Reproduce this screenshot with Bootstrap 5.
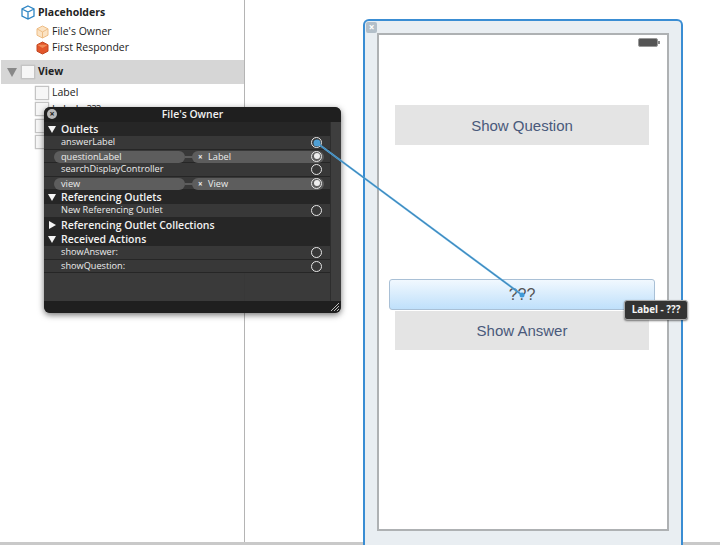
<!DOCTYPE html>
<html lang="en">
<head>
<meta charset="utf-8">
<title>File's Owner</title>
<link href="https://cdn.jsdelivr.net/npm/bootstrap@5.3.0/dist/css/bootstrap.min.css" rel="stylesheet">
<style>
html,body{height:545px;overflow:hidden;background:#fff}
body{font-family:"Open Sans","Liberation Sans",sans-serif;position:relative;color:#222}
.stage{height:542px}
.side{width:245px;border-right:1px solid #b4b4b4;font-size:10.5px;padding-left:1px}
.ph-head{height:24px;padding-left:20px;font-weight:700;gap:3px;padding-top:1px;font-size:10.5px}
.tree-r{height:16px;padding-left:35px;gap:3px}
.view-band{height:24px;background:#d6d6d6;margin-top:4px;font-weight:700;padding-left:6px;font-size:10.5px}
.tri-g{width:0;height:0;border-left:5px solid transparent;border-right:5px solid transparent;border-top:9px solid #888;margin-right:4px}
.box-i{width:14px;height:14px;background:#f6f6f6;border:1px solid #c4c4c4;box-shadow:0 0 1px #aaa;flex:none}
.box-v{margin-right:3px}
.sub-r{height:16.3px;padding-left:34px;gap:3px}
.sub-list{padding-top:1px}
.canvas-a{flex:1;padding:19px 0 0 118px}
.phone-w{width:320px;height:526px;border:2px solid #3a8dd3;border-bottom:0;border-radius:6px 6px 0 0;background:#e9eef2;padding:12px 12px 0;position:relative}
.x-i{position:absolute;left:1px;top:1px;width:11px;height:11px;background:#b3bfc9;border-radius:2px;color:#fff;font-size:10px;line-height:11px;text-align:center;font-weight:700}
.view-i{height:498px;background:#fff;border:2px solid #aeb1b3;padding:3px 5px 0 10px}
.batt{width:22px;height:9px;margin-left:auto;margin-right:2px;margin-bottom:58px;display:block}
.gray-b{height:40px;width:254px;margin-left:6px;background:#e4e4e4;color:#49597b;font:15px "Liberation Sans",sans-serif}
.gap-q{height:134px}
.lab-s{height:31px;width:266px;border:1px solid #a9c0d6;border-radius:3px;background:linear-gradient(#f1f8fe,#bfe0fb);color:#555;font:16px "Liberation Sans",sans-serif;margin-bottom:1px}
.gray-a{height:39px}
.bottom-b{height:3px;background:#c9c9c9}
.pop-w{position:absolute;left:44px;top:107px;width:297px;height:206px;background:rgba(52,52,52,.97);border-radius:6px;box-shadow:0 2px 6px rgba(0,0,0,.55);color:#ececec;font-size:9.2px;overflow:hidden}
.pop-t{height:15px;background:#1f1f1f;color:#f2f2f2;font-size:10.4px;font-weight:600;line-height:14px}
.pop-x{position:absolute;left:3px;top:2px;width:10px;height:10px;border-radius:50%;background:#b9b9b9;color:#222;font-size:9px;line-height:10px;text-align:center;font-weight:700}
.pop-l{width:286px}
.pop-g{height:14px;background:#262626;font-size:10.5px;font-weight:600;padding-left:17px;position:relative;line-height:14px;color:#f2f2f2}
.tri-w{position:absolute;left:4px;top:4px;width:0;height:0;border-left:4px solid transparent;border-right:4px solid transparent;border-top:7px solid #f4f4f4}
.tri-r{position:absolute;left:5px;top:3px;width:0;height:0;border-top:4px solid transparent;border-bottom:4px solid transparent;border-left:7px solid #f4f4f4}
.pop-r{height:13.6px;padding-left:17px;border-bottom:1px solid #262626;background:#383838;position:relative;line-height:12px}
.pill-n{position:absolute;left:10px;top:1px;width:131px;height:12px;border-radius:6px;background:#5d5d5d;padding-left:7px}
.pill-t{position:absolute;left:148px;top:1px;width:132px;height:12px;border-radius:6px;background:#5d5d5d;padding-left:16px}
.pill-c{position:absolute;left:141px;top:6px;width:8px;height:2px;background:#5d5d5d}
.pill-x{position:absolute;left:6px;top:0;font-weight:700;font-size:8px}
.ring{position:absolute;left:267px;top:1px;width:11px;height:11px;border:1px solid #e6e6e6;border-radius:50%}
.ring.on::after{content:"";position:absolute;left:1.5px;top:1.5px;width:6px;height:6px;border-radius:50%;background:#eee}
.pop-f{position:absolute;left:0;right:0;bottom:0;height:12px;background:#1f1f1f}
.pop-s{position:absolute;right:0;top:15px;bottom:12px;width:11px;background:#3e3e3e;border-left:1px solid #2d2d2d}
.grip{position:absolute;right:1px;bottom:1px}
.wire{position:absolute;left:0;top:0;pointer-events:none}
.tip-b{position:absolute;left:624px;top:300px;width:64px;height:20px;background:#333;border:1px solid #aaa;border-radius:3px;color:#f4f4f4;font-size:9.8px;font-weight:700;line-height:18px;text-align:center;box-shadow:0 1px 2px rgba(0,0,0,.5)}
</style>
</head>
<body>
<div class="d-flex stage">
  <aside class="side flex-shrink-0">
    <div class="ph-head d-flex align-items-center">
      <svg width="14" height="15" viewBox="0 0 14 15"><path d="M7 1 13 4v7l-6 3-6-3V4zM1 4l6 3 6-3M7 7v7" fill="none" stroke="#2f86c4" stroke-width="1.3"/></svg>
      <span>Placeholders</span>
    </div>
    <div class="tree-r d-flex align-items-center">
      <svg width="13" height="14" viewBox="0 0 13 14"><path d="M6.5 1 12 3.8v6.4L6.500 13 1 10.200V3.800z" fill="#fbe3c4" stroke="#eebd85"/><path d="M1 3.800 6.500 7 12 3.800M6.500 7v6" fill="none" stroke="#eebd85"/></svg>
      <span>File's Owner</span>
    </div>
    <div class="tree-r d-flex align-items-center">
      <svg width="13" height="14" viewBox="0 0 13 14"><path d="M6.500 1 12 3.800v6.400L6.500 13 1 10.200V3.800z" fill="#e2562b" stroke="#c24620"/><path d="M1 3.800 6.500 7 12 3.800z" fill="#f18a55"/></svg>
      <span>First Responder</span>
    </div>
    <div class="view-band d-flex align-items-center">
      <span class="tri-g"></span><span class="box-i box-v"></span><span>View</span>
    </div>
    <div class="sub-list">
      <div class="sub-r d-flex align-items-center"><span class="box-i"></span><span>Label</span></div>
      <div class="sub-r d-flex align-items-center"><span class="box-i"></span><span>Label - ???</span></div>
      <div class="sub-r d-flex align-items-center"><span class="box-i"></span><span>Button - Show Question</span></div>
      <div class="sub-r d-flex align-items-center"><span class="box-i"></span><span>Button - Show Answer</span></div>
    </div>
  </aside>
  <main class="canvas-a">
    <div class="phone-w">
      <span class="x-i">×</span>
      <div class="view-i">
        <svg class="batt" viewBox="0 0 22 9"><rect x=".5" y=".5" width="19" height="8" rx="1.500" fill="#555" stroke="#999"/><rect x="20" y="3" width="2" height="3" fill="#888"/></svg>
        <div class="gray-b d-flex align-items-center justify-content-center">Show Question</div>
        <div class="gap-q"></div>
        <div class="lab-s d-flex align-items-center justify-content-center">???</div>
        <div class="gray-b gray-a d-flex align-items-center justify-content-center">Show Answer</div>
      </div>
    </div>
  </main>
</div>
<div class="bottom-b"></div>

<section class="pop-w">
  <div class="pop-t text-center">File's Owner</div>
  <span class="pop-x">×</span>
  <div class="pop-l">
    <div class="pop-g"><span class="tri-w"></span>Outlets</div>
    <div class="pop-r">answerLabel<span class="ring on"></span></div>
    <div class="pop-r"><span class="pill-n">questionLabel</span><span class="pill-c"></span><span class="pill-t"><span class="pill-x">×</span>Label</span><span class="ring on"></span></div>
    <div class="pop-r">searchDisplayController<span class="ring"></span></div>
    <div class="pop-r"><span class="pill-n">view</span><span class="pill-c"></span><span class="pill-t"><span class="pill-x">×</span>View</span><span class="ring on"></span></div>
    <div class="pop-g"><span class="tri-w"></span>Referencing Outlets</div>
    <div class="pop-r">New Referencing Outlet<span class="ring"></span></div>
    <div class="pop-g"><span class="tri-r"></span>Referencing Outlet Collections</div>
    <div class="pop-g"><span class="tri-w"></span>Received Actions</div>
    <div class="pop-r">showAnswer:<span class="ring"></span></div>
    <div class="pop-r">showQuestion:<span class="ring"></span></div>
  </div>
  <div class="pop-s"></div>
  <div class="pop-f">
    <svg class="grip" width="10" height="10" viewBox="0 0 10 10"><path d="M1 9 9 1M4 9l5-5M7 9l2-2" stroke="#bbb" stroke-width="1"/></svg>
  </div>
</section>

<svg class="wire" width="720" height="545" viewBox="0 0 720 545">
  <path d="M317 143 522 295" stroke="#5aa9dc" stroke-width="2"/>
  <path d="M317 143 522 295" stroke="#2d6f9f" stroke-width=".6"/>
  <circle cx="317" cy="143" r="3.500" fill="#4f9fd4"/>
  <circle cx="522" cy="295" r="2.500" fill="#3f9bd8"/>
</svg>

<div class="tip-b">Label - ???</div>

<script src="https://cdn.jsdelivr.net/npm/bootstrap@5.3.0/dist/js/bootstrap.bundle.min.js"></script>
</body>
</html>
